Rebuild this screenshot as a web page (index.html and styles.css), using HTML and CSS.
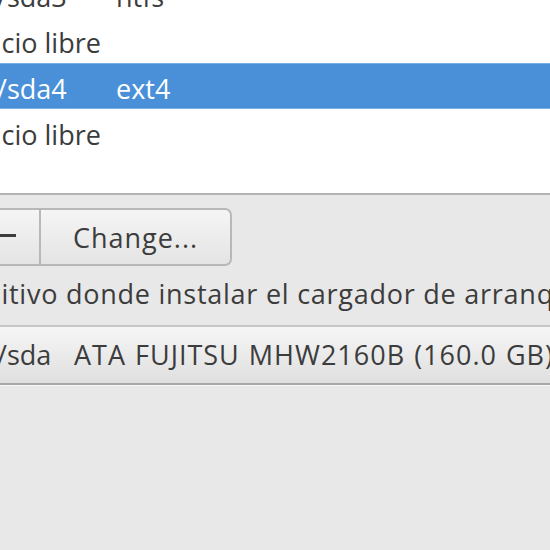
FILE: index.html
```html
<!DOCTYPE html>
<html lang="es">
<head>
<meta charset="utf-8">
<title>Particiones</title>
<link rel="stylesheet" href="styles.css">
</head>
<body>
<div class="window">
  <div class="list">
    <div class="rows">
      <div class="row"><span class="dev">/dev/sda3</span><span class="type">ntfs</span></div>
      <div class="row"><span class="dev">espacio libre</span><span class="type"></span></div>
      <div class="row sel"><span class="dev">/dev/sda4</span><span class="type">ext4</span></div>
      <div class="row"><span class="dev">espacio libre</span><span class="type"></span></div>
      <div class="row"></div>
    </div>
  </div>
  <div class="toolbar">
    <button class="btn btn-minus" aria-label="Eliminar"><span class="minus-icon"></span></button>
    <button class="btn btn-change">Change...</button>
  </div>
  <div class="label">Dispositivo donde instalar el cargador de arranque:</div>
  <div class="combo">
    <span class="combo-dev">/dev/sda</span>
    <span class="combo-name">ATA FUJITSU MHW2160B (160.0 GB)</span>
  </div>
</div>
</body>
</html>
```
FILE: styles.css
```css
html, body {
  margin: 0;
  padding: 0;
}
body {
  width: 550px;
  height: 550px;
  overflow: hidden;
  background: #e8e8e8;
  font-family: "Open Sans", "Noto Sans", sans-serif;
  font-size: 27px;
  color: #3c3c3c;
}
.window {
  margin-left: -58px;
  width: 700px;
}
.list {
  background: #ffffff;
  height: 193px;
  overflow: hidden;
  border-bottom: 2px solid #b4b4b4;
}
.rows {
  margin-top: -29px;
}
.row {
  display: flex;
  align-items: center;
  height: 46px;
  padding-top: 4px;
  box-sizing: border-box;
  white-space: nowrap;
}
.row .dev {
  width: 174px;
  flex: none;
}
.row.sel {
  background: #4a90d9;
  color: #ffffff;
  border-top: 1px solid #7aaee6;
  border-bottom: 1px solid #7aaee6;
}
.toolbar {
  display: flex;
  margin-top: 13px;
  padding-left: 27px;
}
.btn {
  height: 58px;
  box-sizing: border-box;
  margin: 0;
  font: inherit;
  color: inherit;
  border: 2px solid #b8b8b8;
  background: linear-gradient(#f5f5f5, #e4e4e4);
  display: flex;
  align-items: center;
  justify-content: center;
  padding: 0;
}
.btn-minus {
  width: 70px;
  border-right: none;
  border-radius: 7px 0 0 7px;
}
.minus-icon {
  display: block;
  width: 22px;
  height: 3px;
  background: #3c3c3c;
  margin-top: -3px;
}
.btn-change {
  width: 193px;
  border-radius: 0 7px 7px 0;
  letter-spacing: 1px;
}
.label {
  margin: 11px 0 0 -30px;
  line-height: 34px;
  letter-spacing: 0.75px;
  white-space: nowrap;
}
.combo {
  margin-top: 14px;
  height: 60px;
  box-sizing: border-box;
  border-top: 2px solid #c6c6c6;
  border-bottom: 2px solid #a8a8a8;
  box-shadow: 0 1px 0 #f8f8f8;
  background: linear-gradient(#f6f6f6, #dfdfdf);
  display: flex;
  align-items: center;
  padding-bottom: 2px;
  white-space: nowrap;
}
.combo-dev {
  width: 132px;
  flex: none;
}
.combo-name {
  letter-spacing: 1px;
  word-spacing: 1px;
}
```
